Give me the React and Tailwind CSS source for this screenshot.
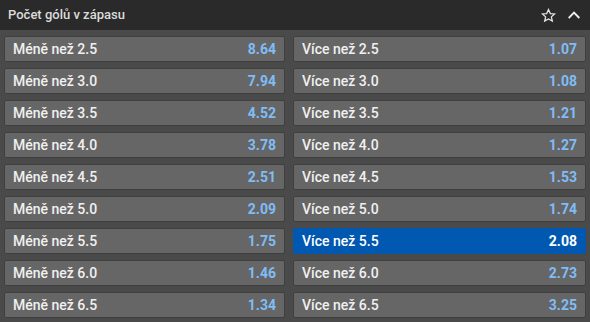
import { useState, Fragment } from "react";

const rows = [
  ["2.5", "8.64", "1.07"],
  ["3.0", "7.94", "1.08"],
  ["3.5", "4.52", "1.21"],
  ["4.0", "3.78", "1.27"],
  ["4.5", "2.51", "1.53"],
  ["5.0", "2.09", "1.74"],
  ["5.5", "1.75", "2.08"],
  ["6.0", "1.46", "2.73"],
  ["6.5", "1.34", "3.25"],
];

const OddButton = ({ label, odd, active, onClick }) => (
  <button
    onClick={onClick}
    className={
      active
        ? "h-[26px] flex items-center justify-between px-2 rounded-[2px] border border-[#0058b0] bg-[#0058b0] text-white"
        : "h-[26px] flex items-center justify-between px-2 rounded-[2px] border border-[#3f3f3f] bg-[#666666] text-[#f0f0f0] hover:bg-[#707070]"
    }
  >
    <span className="text-[14px] font-medium">{label}</span>
    <span
      className={
        active
          ? "text-[14px] font-bold text-white"
          : "text-[14px] font-bold text-[#80bdf6]"
      }
    >
      {odd}
    </span>
  </button>
);

export default function App() {
  const [selected, setSelected] = useState("over-5.5");

  return (
    <div
      className="w-[590px] h-[322px] bg-[#4a4a4a] overflow-hidden"
      style={{ fontFamily: "Roboto, 'Liberation Sans', sans-serif" }}
    >
      {/* Header */}
      <div className="h-[30px] bg-[#2a2a2a] flex items-center justify-between pl-2 pr-[9px]">
        <h2 className="text-[13px] font-medium text-[#dcdcdc]">
          Počet gólů v zápasu
        </h2>
        <div className="flex items-center gap-[11px]">
          <svg width="15" height="15" viewBox="0 0 24 24" fill="none" stroke="#e8e8e8" strokeWidth="2" strokeLinejoin="miter">
            <polygon points="12,2.5 14.9,8.9 21.8,9.6 16.6,14.2 18.1,21 12,17.5 5.9,21 7.4,14.2 2.2,9.6 9.1,8.9" />
          </svg>
          <svg width="14" height="14" viewBox="0 0 24 24" fill="none" stroke="#f0f0f0" strokeWidth="3.2" strokeLinecap="square">
            <polyline points="4,16 12,8 20,16" />
          </svg>
        </div>
      </div>

      {/* Odds */}
      <div className="grid grid-cols-[281px_293px] gap-x-[8px] gap-y-[6px] pl-[4px] pt-[6px]">
        {rows.map(([line, under, over]) => (
          <Fragment key={line}>
            <OddButton
              label={`Méně než ${line}`}
              odd={under}
              active={selected === "under-" + line}
              onClick={() => setSelected("under-" + line)}
            />
            <OddButton
              label={`Více než ${line}`}
              odd={over}
              active={selected === "over-" + line}
              onClick={() => setSelected("over-" + line)}
            />
          </Fragment>
        ))}
      </div>
    </div>
  );
}
